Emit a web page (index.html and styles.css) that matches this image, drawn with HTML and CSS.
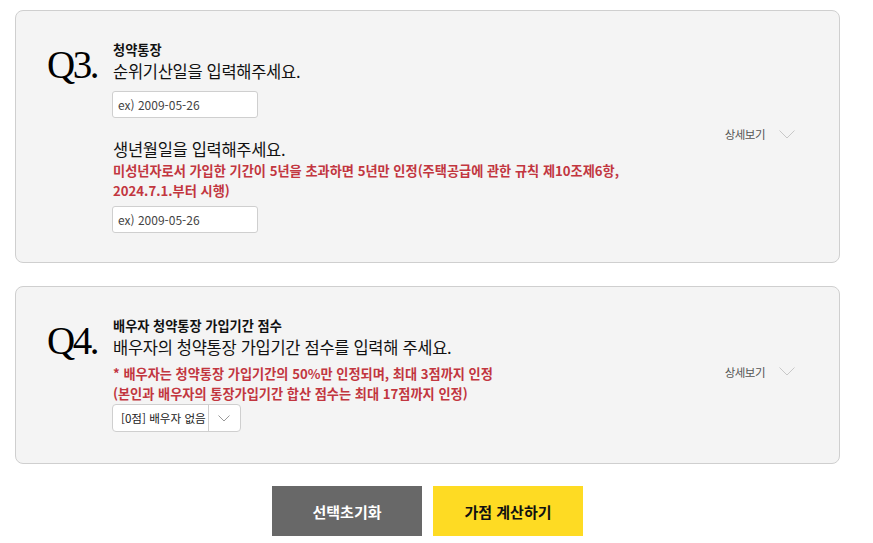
FILE: index.html
```html
<!DOCTYPE html>
<html lang="ko">
<head>
  <meta charset="UTF-8">
  <meta name="viewport" content="width=device-width, initial-scale=1.0">
  <title>가점 계산하기</title>
  <link rel="stylesheet" href="styles.css">
</head>
<body>
  <div class="page">
    <!-- Q3 -->
    <div class="qbox">
      <div class="qmain">
        <div class="qnum">Q3.</div>
        <div class="qbody">
          <p class="qtitle">청약통장</p>
          <p class="qdesc">순위기산일을 입력해주세요.</p>
          <input type="text" class="date-input" placeholder="ex) 2009-05-26">

          <p class="qdesc second">생년월일을 입력해주세요.</p>
          <p class="notice">미성년자로서 가입한 기간이 5년을 초과하면 5년만 인정(주택공급에 관한 규칙 제10조제6항,<br>2024.7.1.부터 시행)</p>
          <input type="text" class="date-input tight" placeholder="ex) 2009-05-26">
        </div>
      </div>
      <a class="more" href="#">상세보기
        <svg width="16" height="9" viewBox="0 0 16 9"><path d="M0.5 0.5 L8 8 L15.5 0.5" fill="none" stroke="#c8c8c8" stroke-width="1"/></svg>
      </a>
    </div>

    <!-- Q4 -->
    <div class="qbox short">
      <div class="qmain">
        <div class="qnum">Q4.</div>
        <div class="qbody">
          <p class="qtitle">배우자 청약통장 가입기간 점수</p>
          <p class="qdesc">배우자의 청약통장 가입기간 점수를 입력해 주세요.</p>
          <p class="notice spaced">* 배우자는 청약통장 가입기간의 50%만 인정되며, 최대 3점까지 인정<br>(본인과 배우자의 통장가입기간 합산 점수는 최대 17점까지 인정)</p>
          <div class="select">
            <span class="select-value">[0점] 배우자 없음</span>
            <span class="select-arrow">
              <svg width="12" height="7" viewBox="0 0 12 7"><path d="M0.5 0.5 L6 6 L11.5 0.5" fill="none" stroke="#999" stroke-width="1"/></svg>
            </span>
          </div>
        </div>
      </div>
      <a class="more" href="#">상세보기
        <svg width="16" height="9" viewBox="0 0 16 9"><path d="M0.5 0.5 L8 8 L15.5 0.5" fill="none" stroke="#c8c8c8" stroke-width="1"/></svg>
      </a>
    </div>

    <div class="btns">
      <button type="button" class="btn btn-reset">선택초기화</button>
      <button type="button" class="btn btn-calc">가점 계산하기</button>
    </div>
  </div>
</body>
</html>
```

FILE: styles.css
```css
/* page layout */
body {
  margin: 0;
  font-family: "Noto Sans CJK KR", "Noto Sans", sans-serif;
  color: #111;
  background: #fff;
}
.page {
  width: 825px;
  padding: 10px 0 0 15px;
}
p {
  margin: 0;
}

/* question box */
.qbox {
  display: flex;
  align-items: center;
  background: #f4f4f4;
  border: 1px solid #cfcfcf;
  border-radius: 8px;
  padding: 30px 44px 29px 31px;
  margin-bottom: 23px;
}
.qbox.short {
  padding-bottom: 31px;
}
.qmain {
  flex: 1;
  display: flex;
  align-items: flex-start;
}
.qnum {
  width: 66px;
  font-family: "Liberation Serif", serif;
  font-size: 39px;
  letter-spacing: -2.5px;
  line-height: 40px;
  margin-top: 4px;
  color: #000;
}
.qbody {
  flex: 1;
}
.qtitle {
  font-size: 13.2px;
  font-weight: bold;
  line-height: 18px;
}
.qdesc {
  font-size: 16.5px;
  line-height: 24px;
  letter-spacing: -0.3px;
}
.qdesc.second {
  margin-top: 19px;
}
.notice {
  font-size: 13.2px;
  font-weight: bold;
  line-height: 19.5px;
  color: #c2363f;
}
.notice.spaced {
  margin-top: 5px;
}

/* inputs */
.date-input {
  display: block;
  box-sizing: border-box;
  width: 146px;
  height: 27px;
  margin-top: 8px;
  margin-left: -1px;
  padding: 0 5px;
  border: 1px solid #cfcfcf;
  border-radius: 3px;
  background: #fff;
  font-family: "Noto Sans CJK KR", sans-serif;
  font-size: 12px;
}
.date-input::placeholder {
  color: #444;
}
.date-input.tight {
  margin-top: 6px;
}

.select {
  display: inline-flex;
  box-sizing: border-box;
  height: 28px;
  margin-top: 1px;
  margin-left: -1px;
  border: 1px solid #cfcfcf;
  border-radius: 4px;
  background: #fff;
  font-size: 11.6px;
  align-items: stretch;
}
.select-value {
  display: flex;
  align-items: center;
  padding: 0 2px 0 8px;
  color: #222;
}
.select-arrow {
  display: flex;
  align-items: center;
  justify-content: center;
  width: 31px;
  border-left: 1px solid #cfcfcf;
}

/* detail link */
.more {
  display: flex;
  align-items: center;
  gap: 14px;
  font-size: 11.5px;
  letter-spacing: -0.5px;
  color: #555;
  text-decoration: none;
  margin-top: -6px;
}

/* buttons */
.btns {
  display: flex;
  justify-content: center;
  gap: 11px;
  margin-top: -1px;
}
.btn {
  width: 150px;
  height: 50px;
  border: none;
  font-family: "Noto Sans CJK KR", sans-serif;
  font-size: 15px;
  font-weight: bold;
  cursor: pointer;
}
.btn-reset {
  background: #686868;
  color: #fff;
}
.btn-calc {
  background: #fedb23;
  color: #111;
}
```
